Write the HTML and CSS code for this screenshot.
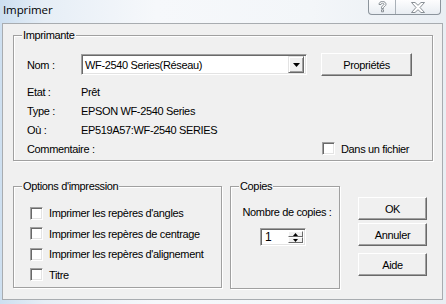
FILE: index.html
```html
<!DOCTYPE html>
<html lang="fr">
<head>
    <meta charset="UTF-8">
    <title>Imprimer</title>
    <link rel="stylesheet" href="styles.css">
</head>
<body>
    <div class="window">
        <div class="titlebar">
            <span class="title">Imprimer</span>
            <div class="caption-buttons">
                <span class="cap-btn help">
                    <svg width="9" height="12" viewBox="0 0 9 12">
                        <path d="M1 3.5 C1 1.5 2.5 0.5 4.5 0.5 C6.5 0.5 8 1.6 8 3.3 C8 5 6 5.5 5.5 6.5 L5.5 7.5 L3.5 7.5 L3.5 6.2 C3.5 4.8 6 4.4 6 3.3 C6 2.6 5.4 2.2 4.5 2.2 C3.6 2.2 3 2.7 3 3.5 Z M3.5 8.8 L5.5 8.8 L5.5 10.8 L3.5 10.8 Z" fill="#fff" stroke="#7d838a" stroke-width="0.9"/>
                    </svg>
                </span>
                <span class="cap-btn close">
                    <svg width="14" height="11" viewBox="0 0 14 11">
                        <path d="M0.5 0.5 L4 0.5 L7 3.3 L10 0.5 L13.5 0.5 L9 5.5 L13.5 10.5 L10 10.5 L7 7.7 L4 10.5 L0.5 10.5 L5 5.5 Z" fill="#fff" stroke="#7d838a" stroke-width="0.9"/>
                    </svg>
                </span>
            </div>
        </div>

        <div class="client">
            <div class="group printer">
                <span class="group-title">Imprimante</span>

                <div class="name-row">
                    <span class="label">Nom :</span>
                    <div class="combo">
                        <span class="combo-text">WF-2540 Series(Réseau)</span>
                        <span class="combo-btn">
                            <svg width="7" height="4" viewBox="0 0 7 4"><path d="M0 0 L7 0 L3.5 4 Z" fill="#000"/></svg>
                        </span>
                    </div>
                    <button class="btn props-btn">Propriétés</button>
                </div>

                <div class="info-row first"><span class="label">Etat :</span><span>Prêt</span></div>
                <div class="info-row"><span class="label">Type :</span><span>EPSON WF-2540 Series</span></div>
                <div class="info-row"><span class="label">Où :</span><span>EP519A57:WF-2540 SERIES</span></div>
                <div class="info-row">
                    <span class="label">Commentaire :</span>
                    <label class="check to-file"><span class="box"></span>Dans un fichier</label>
                </div>
            </div>

            <div class="bottom">
                <div class="group options">
                    <span class="group-title">Options d'impression</span>
                    <label class="check option"><span class="box"></span>Imprimer les repères d'angles</label>
                    <label class="check option"><span class="box"></span>Imprimer les repères de centrage</label>
                    <label class="check option"><span class="box"></span>Imprimer les repères d'alignement</label>
                    <label class="check option"><span class="box"></span>Titre</label>
                </div>

                <div class="group copies">
                    <span class="group-title">Copies</span>
                    <div class="copies-label">Nombre de copies :</div>
                    <div class="spinner">
                        <span class="spin-value">1</span>
                        <div class="spin-arrows">
                            <span class="spin-btn"><svg width="5" height="3" viewBox="0 0 5 3"><path d="M0 3 L5 3 L2.5 0 Z" fill="#000"/></svg></span>
                            <span class="spin-btn"><svg width="5" height="3" viewBox="0 0 5 3"><path d="M0 0 L5 0 L2.5 3 Z" fill="#000"/></svg></span>
                        </div>
                    </div>
                </div>

                <div class="actions">
                    <button class="btn action ok">OK</button>
                    <button class="btn action cancel">Annuler</button>
                    <button class="btn action help-btn">Aide</button>
                </div>
            </div>
        </div>
    </div>
</body>
</html>
```

FILE: styles.css
```css
* {
    box-sizing: border-box;
}

body {
    margin: 0;
    font-family: 'Liberation Sans', Arial, sans-serif;
    font-size: 11px;
    letter-spacing: -0.35px;
    color: #000;
}

.window {
    width: 446px;
    height: 304px;
    overflow: hidden;
    background: linear-gradient(90deg, #cddff0 0, #e6eef6 10%, #f6f8fb 35%, #f3f6f9 70%, #e9eef3 100%);
}

.titlebar {
    height: 23px;
    display: flex;
    justify-content: space-between;
    align-items: flex-start;
}

.title {
    font-family: 'Open Sans', 'Noto Sans', sans-serif;
    font-size: 11.5px;
    letter-spacing: -0.1px;
    line-height: 20px;
    padding-left: 3px;
    color: #000;
}

.caption-buttons {
    display: flex;
    height: 15px;
    margin-right: 5px;
    border: 1px solid #8c949c;
    border-top: none;
    border-radius: 0 0 4px 4px;
    background: linear-gradient(#fdfdfe, #e8edf2);
}

.cap-btn {
    display: flex;
    align-items: center;
    justify-content: center;
    height: 14px;
}

.cap-btn.help {
    width: 27px;
    border-right: 1px solid #a9b0b7;
}

.cap-btn.close {
    width: 44px;
}

.client {
    width: 441px;
    height: 277px;
    margin-left: 2px;
    border: 1px solid #a8acb0;
    background-color: #f0f0f0;
}

/* etched group boxes */
.group {
    position: relative;
    border: 1px solid #a0a0a0;
    box-shadow: inset 1px 1px 0 #fff, 1px 1px 0 #fff;
}

.group-title {
    position: absolute;
    top: -7px;
    left: 8px;
    padding: 0 1px;
    line-height: 13px;
    background-color: #f0f0f0;
}

.printer {
    width: 420px;
    height: 126px;
    margin: 11px 0 0 10px;
    padding: 17px 20px 0 13px;
}

.label {
    min-width: 54px;
}

.name-row {
    display: flex;
    align-items: center;
    height: 23px;
}

.combo {
    display: flex;
    align-items: center;
    width: 226px;
    height: 21px;
    border: 1px solid;
    border-color: #a0a0a0 #fff #fff #a0a0a0;
    box-shadow: inset 1px 1px 0 #696969, inset -1px -1px 0 #e3e3e3;
    background-color: #fff;
    padding: 2px 2px 2px 3px;
}

.combo-text {
    flex: 1;
}

.combo-btn {
    display: flex;
    align-items: center;
    justify-content: center;
    width: 16px;
    height: 17px;
    background-color: #f0f0f0;
    border: 1px solid;
    border-color: #e3e3e3 #696969 #696969 #e3e3e3;
    box-shadow: inset 1px 1px 0 #fff, inset -1px -1px 0 #a0a0a0;
}

.btn {
    font-family: inherit;
    font-size: 11px;
    letter-spacing: -0.35px;
    color: #000;
    background-color: #f0f0f0;
    border: 1px solid;
    border-color: #fff #696969 #696969 #fff;
    box-shadow: inset -1px -1px 0 #a0a0a0;
    padding: 0;
    height: 23px;
}

.props-btn {
    width: 91px;
    margin-left: 14px;
}

.info-row {
    display: flex;
    align-items: center;
    height: 19px;
}

.info-row.first {
    margin-top: 6px;
}

.check {
    display: flex;
    align-items: center;
    white-space: nowrap;
}

.box {
    flex: none;
    width: 13px;
    height: 13px;
    margin-right: 6px;
    border: 1px solid;
    border-color: #a0a0a0 #fff #fff #a0a0a0;
    box-shadow: inset 1px 1px 0 #696969, inset -1px -1px 0 #e3e3e3;
    background-color: #fff;
}

.to-file {
    margin-left: auto;
    width: 90px;
}

.bottom {
    display: flex;
    align-items: flex-start;
    margin: 25px 0 0 10px;
}

.options {
    width: 209px;
    height: 102px;
    padding: 16px 0 0 16px;
}

.option {
    height: 20.5px;
}

.copies {
    width: 110px;
    height: 103px;
    margin-left: 8px;
    padding-top: 19px;
}

.copies-label {
    text-align: center;
    line-height: 13px;
    padding-left: 4px;
}

.spinner {
    display: flex;
    width: 46px;
    height: 18px;
    margin: 9px 0 0 29px;
    border: 1px solid;
    border-color: #a0a0a0 #fff #fff #a0a0a0;
    box-shadow: inset 1px 1px 0 #696969, inset -1px -1px 0 #e3e3e3;
    background-color: #fff;
    padding: 2px 2px 2px 4px;
}

.spin-value {
    flex: 1;
    font-size: 12px;
    line-height: 13px;
}

.spin-arrows {
    display: flex;
    flex-direction: column;
    width: 15px;
}

.spin-btn {
    flex: 1;
    display: flex;
    align-items: center;
    justify-content: center;
    background-color: #f0f0f0;
    border: 1px solid;
    border-color: #fff #696969 #696969 #fff;
}

.actions {
    display: flex;
    flex-direction: column;
    margin: 11px 0 0 18px;
}

.action {
    width: 69px;
}

.cancel {
    margin-top: 3px;
}

.help-btn {
    margin-top: 7px;
}
```
